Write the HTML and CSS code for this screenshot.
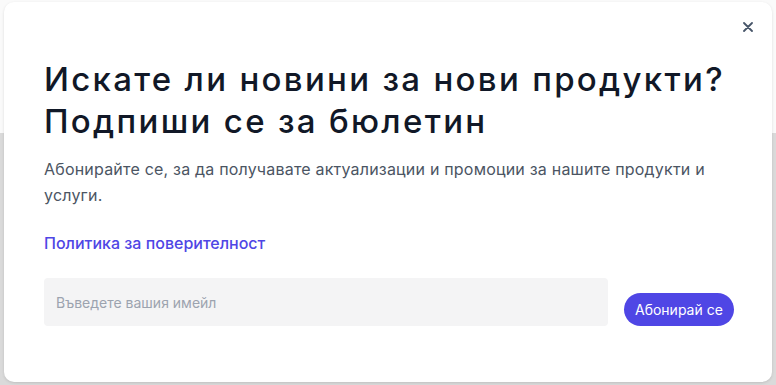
FILE: index.html
```html
<!DOCTYPE html>
<html lang="bg">
<head>
  <meta charset="UTF-8" />
  <title>Бюлетин</title>
  <link rel="stylesheet" href="styles.css">
</head>
<body>

  <div class="modal">
    <div class="modal-top">
      <button class="close-btn" aria-label="Затвори">
        <svg width="10" height="10" viewBox="0 0 10 10">
          <path d="M1 1 L9 9 M9 1 L1 9" stroke="#475569" stroke-width="1.8" stroke-linecap="round" />
        </svg>
      </button>
    </div>

    <h1 class="title">Искате ли новини за нови продукти?<br />Подпиши се за бюлетин</h1>

    <p class="lead">Абонирайте се, за да получавате актуализации и промоции за нашите продукти и услуги.</p>

    <a class="policy" href="#">Политика за поверителност</a>

    <form class="subscribe" onsubmit="return false">
      <input type="email" class="email" placeholder="Въведете вашия имейл" />
      <button type="submit" class="subscribe-btn">Абонирай се</button>
    </form>
  </div>

</body>
</html>
```

FILE: styles.css
```css
* { box-sizing: border-box; }
body {
  margin: 0;
  height: 385px;
  font-family: Inter, 'Noto Sans', sans-serif;
  background: linear-gradient(to bottom, #fafafa 0, #fafafa 133px, #dadada 133px, #dadada 100%);
  padding: 2px 4px 3px 4px;
}

.modal {
  height: 380px;
  background: #fff;
  border-radius: 10px;
  box-shadow: 0 1px 3px rgba(0, 0, 0, 0.12);
  padding: 16px 40px 0 40px;
}

.modal-top {
  display: flex;
  justify-content: flex-end;
  margin-right: -25px;
  height: 26px;
}

.close-btn {
  border: 0;
  background: transparent;
  padding: 4px;
  height: 18px;
  cursor: pointer;
  display: flex;
}

.title {
  margin: 14px 0 0;
  font-size: 33px;
  line-height: 42px;
  font-weight: 500;
  color: #111827;
  letter-spacing: 2.3px;
}

.lead {
  margin: 14px 0 0;
  font-size: 16px;
  line-height: 26px;
  color: #4b5563;
  max-width: 680px;
  letter-spacing: 0.2px;
}

.policy {
  display: inline-block;
  margin-top: 25px;
  font-size: 16px;
  font-weight: 500;
  color: #4f46e5;
  text-decoration: none;
}

.subscribe {
  display: flex;
  align-items: flex-end;
  gap: 16px;
  margin-top: 25px;
}

.email {
  flex: 0 0 564px;
  height: 48px;
  border: 0;
  border-radius: 4px;
  background: #f4f4f5;
  padding: 0 12px;
  font-family: inherit;
  font-size: 14px;
  color: #111827;
}

.email::placeholder {
  color: #9ca3af;
}

.subscribe-btn {
  height: 33px;
  padding: 0 11px;
  border: 0;
  border-radius: 999px;
  background: #4f46e5;
  color: #fff;
  font-family: inherit;
  font-size: 14px;
  white-space: nowrap;
  cursor: pointer;
}
```
